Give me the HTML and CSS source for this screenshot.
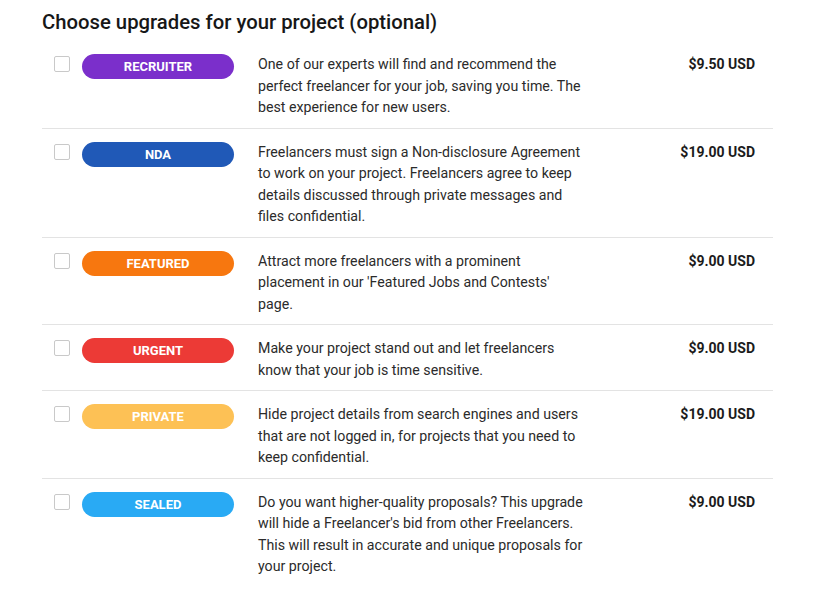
FILE: index.html
```html
<!DOCTYPE html>
<html lang="en">
<head>
  <meta charset="UTF-8" />
  <title>Upgrades</title>
  <link rel="stylesheet" href="styles.css">
</head>
<body>
  <section class="upgrades">
    <h2>Choose upgrades for your project (optional)</h2>

    <div class="row">
      <span class="check"></span>
      <span class="badge recruiter">RECRUITER</span>
      <p class="desc">One of our experts will find and recommend the perfect freelancer for your job, saving you time. The best experience for new users.</p>
      <span class="price">$9.50 USD</span>
    </div>

    <div class="row">
      <span class="check"></span>
      <span class="badge nda">NDA</span>
      <p class="desc">Freelancers must sign a Non-disclosure Agreement to work on your project. Freelancers agree to keep details discussed through private messages and files confidential.</p>
      <span class="price">$19.00 USD</span>
    </div>

    <div class="row">
      <span class="check"></span>
      <span class="badge featured">FEATURED</span>
      <p class="desc">Attract more freelancers with a prominent placement in our 'Featured Jobs and Contests' page.</p>
      <span class="price">$9.00 USD</span>
    </div>

    <div class="row">
      <span class="check"></span>
      <span class="badge urgent">URGENT</span>
      <p class="desc">Make your project stand out and let freelancers know that your job is time sensitive.</p>
      <span class="price">$9.00 USD</span>
    </div>

    <div class="row">
      <span class="check"></span>
      <span class="badge private">PRIVATE</span>
      <p class="desc">Hide project details from search engines and users that are not logged in, for projects that you need to keep confidential.</p>
      <span class="price">$19.00 USD</span>
    </div>

    <div class="row">
      <span class="check"></span>
      <span class="badge sealed">SEALED</span>
      <p class="desc">Do you want higher-quality proposals? This upgrade will hide a Freelancer's bid from other Freelancers. This will result in accurate and unique proposals for your project.</p>
      <span class="price">$9.00 USD</span>
    </div>
  </section>
</body>
</html>
```

FILE: styles.css
```css
* {
  box-sizing: border-box;
  margin: 0;
  padding: 0;
}

body {
  background: #ffffff;
  color: #1f1f1f;
  font-family: Roboto, 'Noto Sans', sans-serif;
}

.upgrades {
  width: 731px;
  margin-left: 42px;
  padding-top: 10px;
}

.upgrades h2 {
  font-size: 20.3px;
  font-weight: 500;
  line-height: 24px;
  color: #171717;
  margin-bottom: 7px;
}

.row {
  display: flex;
  align-items: flex-start;
  padding: 13px 18px 9px 12px;
  border-bottom: 1px solid #e3e3e3;
}

.row:last-child {
  border-bottom: none;
}

.check {
  width: 16px;
  height: 16px;
  margin-top: 2px;
  border: 1px solid #c9c9c9;
  border-radius: 2px;
  flex-shrink: 0;
}

.badge {
  width: 152px;
  height: 25px;
  margin-left: 12px;
  border-radius: 13px;
  color: #ffffff;
  font-size: 13px;
  font-weight: 700;
  line-height: 25px;
  text-align: center;
  flex-shrink: 0;
}

.recruiter { background: #7b2fcb; }
.nda { background: #2059b7; }
.featured { background: #f7770f; }
.urgent { background: #ec3a36; }
.private { background: #fdc155; }
.sealed { background: #29aaf4; }

.desc {
  width: 327px;
  margin-left: 24px;
  font-size: 14.2px;
  line-height: 21.5px;
  color: #2b2b2b;
}

.price {
  margin-left: auto;
  font-size: 14px;
  font-weight: 700;
  line-height: 21.5px;
  color: #1b1b1b;
}
```
